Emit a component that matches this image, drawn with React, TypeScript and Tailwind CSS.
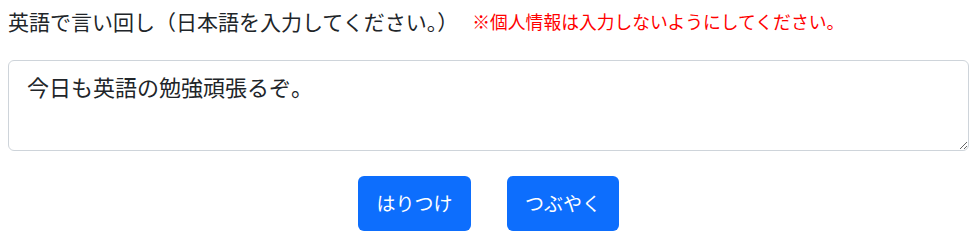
import React from "react";

export default function App() {
  return (
    <div
      className="w-[980px] h-[242px] bg-white px-2 pt-[6px]"
      style={{ fontFamily: '"Noto Sans CJK JP", "Noto Sans", sans-serif' }}
    >
      <div className="flex items-center h-[30px]">
        <span className="text-[21px] text-[#212529] leading-[30px]">
          英語で言い回し（日本語を入力してください。）
        </span>
        <span className="ml-[14px] text-[17.8px] text-[#ff0000] leading-[30px]">
          ※個人情報は入力しないようにしてください。
        </span>
      </div>
      <textarea
        className="mt-[24px] block w-[961px] h-[91px] rounded-[6px] border border-[#ced4da] px-[18px] py-[9px] text-[22px] leading-[32px] text-[#212529] outline-none"
        style={{ fontFamily: '"Noto Sans CJK JP", "Noto Sans", sans-serif' }}
        defaultValue="今日も英語の勉強頑張るぞ。"
      />
      <div className="mt-[25px] flex justify-center gap-[36px] w-[961px]">
        <button className="w-[113px] h-[55px] rounded-[6px] bg-[#0d6efd] text-white text-[19px]">
          はりつけ
        </button>
        <button className="w-[112px] h-[55px] rounded-[6px] bg-[#0d6efd] text-white text-[19px]">
          つぶやく
        </button>
      </div>
    </div>
  );
}
